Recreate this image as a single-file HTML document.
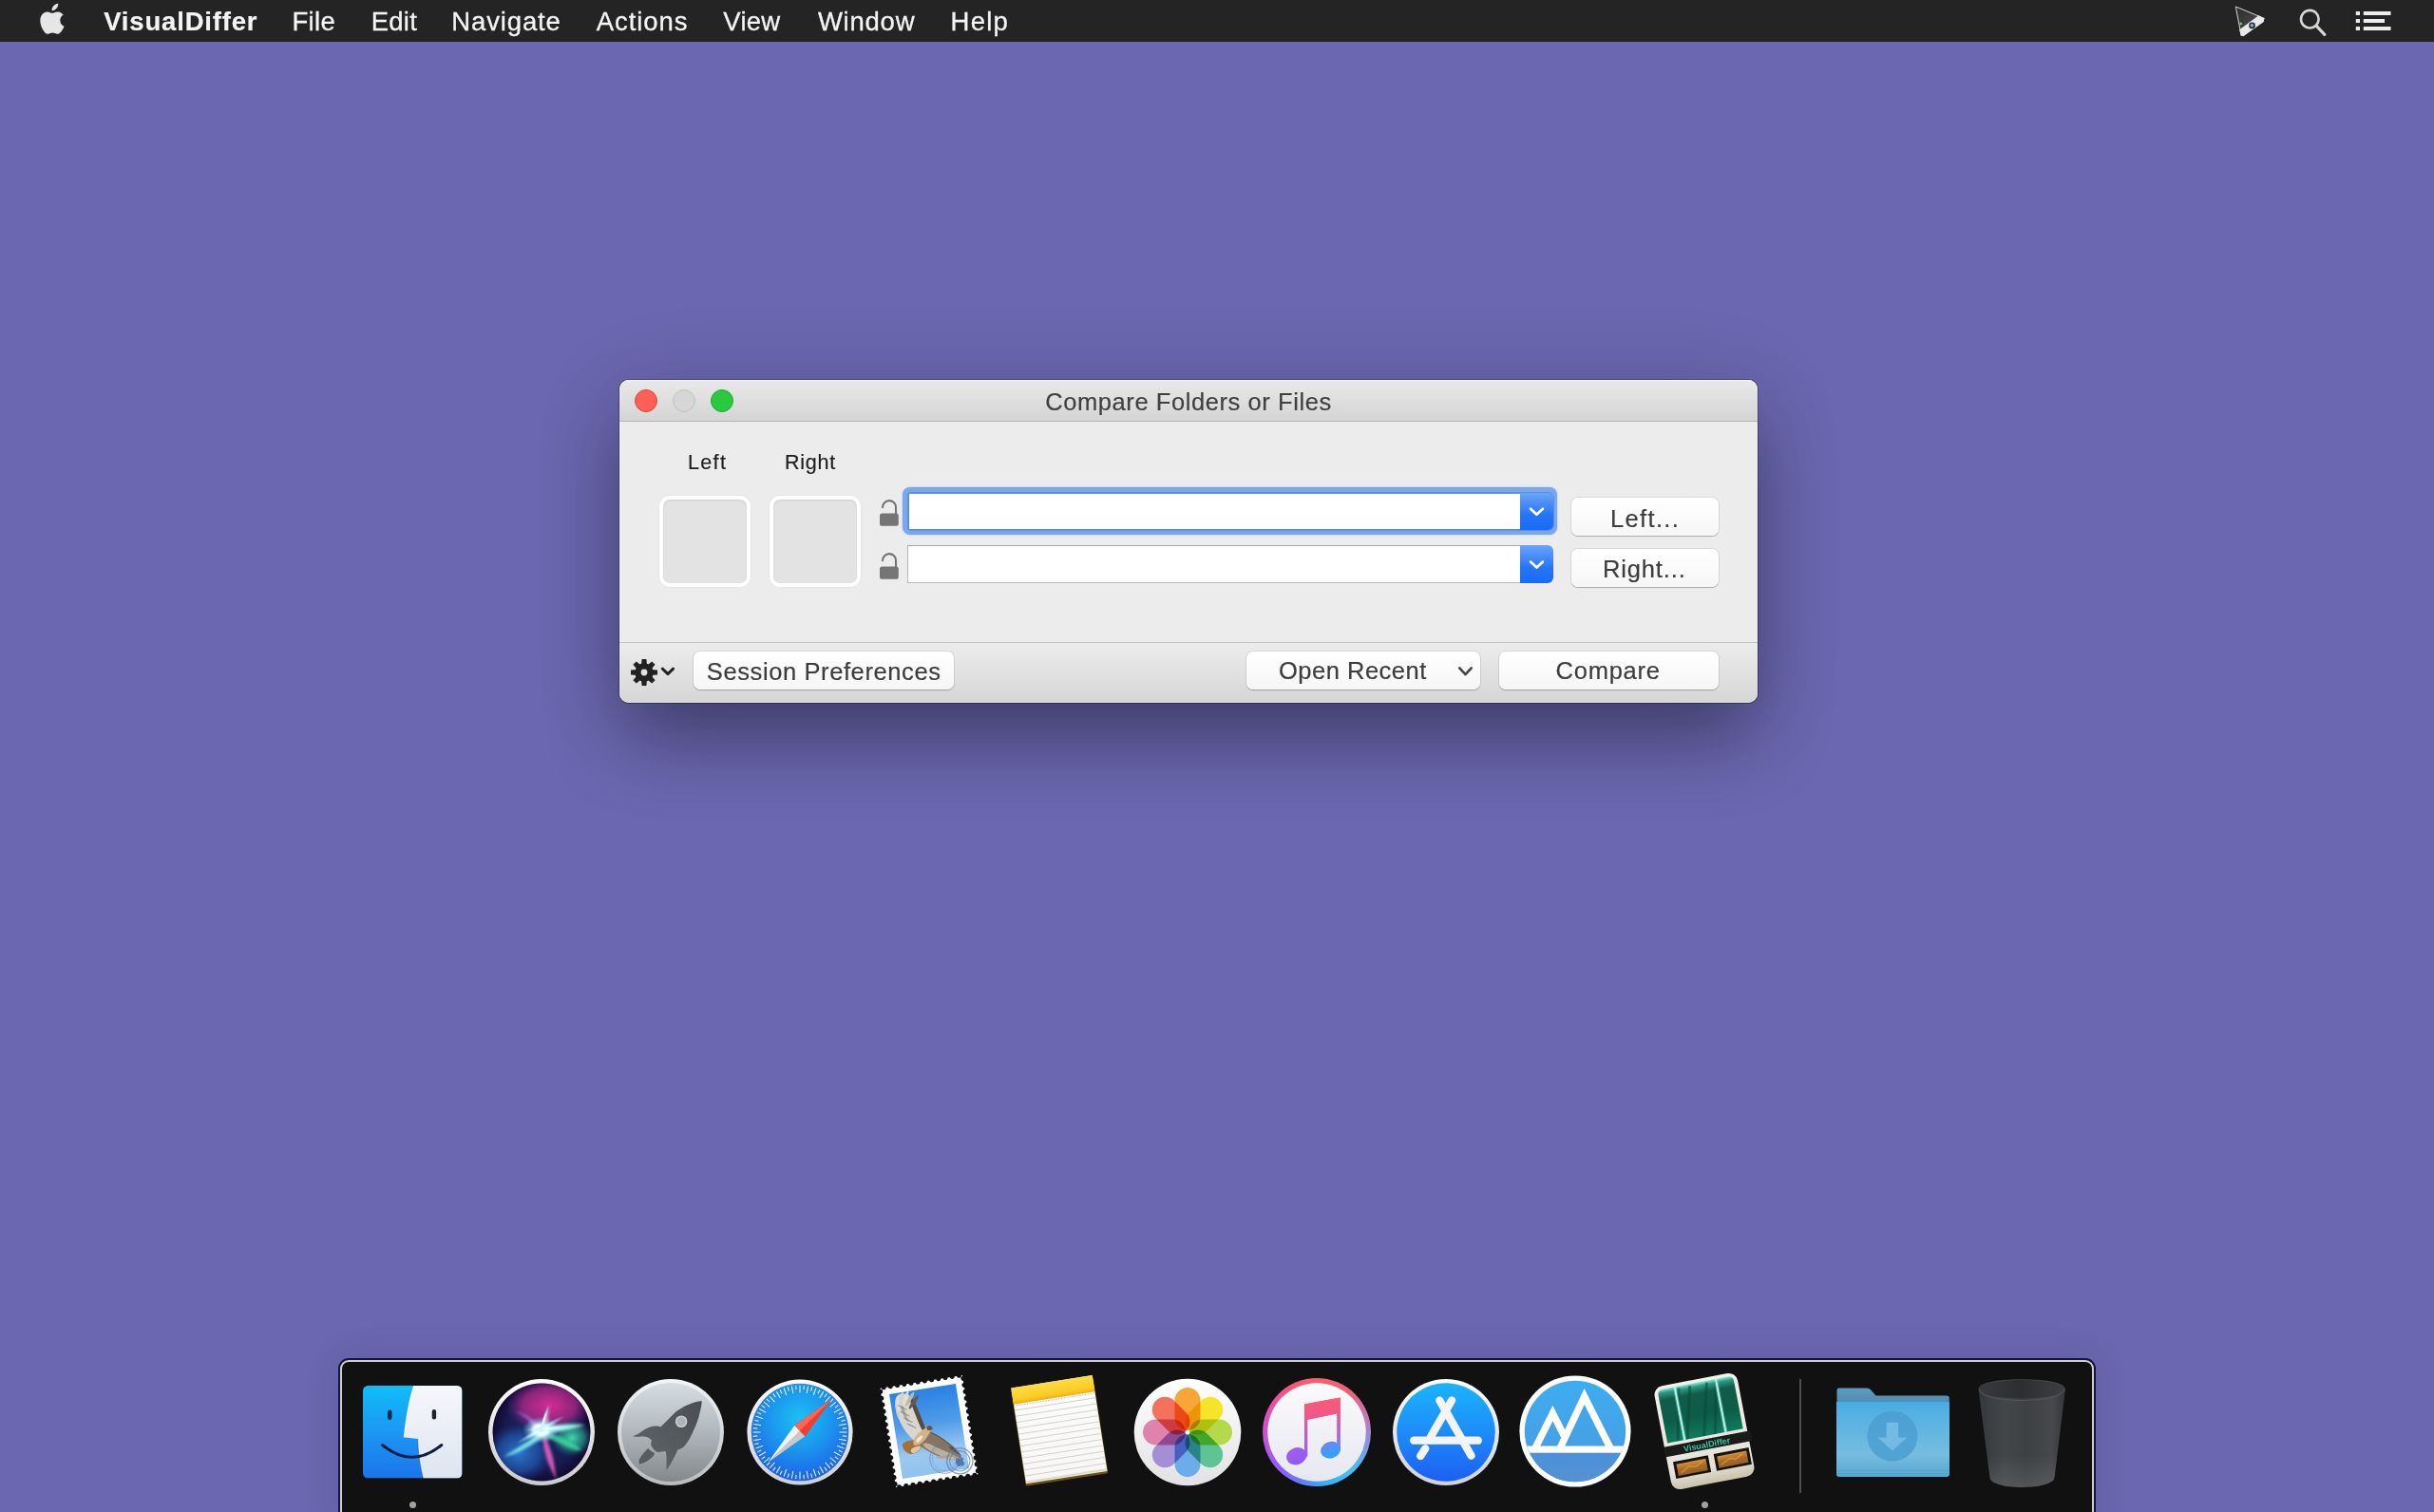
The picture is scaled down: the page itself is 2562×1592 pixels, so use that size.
<!DOCTYPE html>
<html lang="en">
<head>
<meta charset="utf-8">
<title>VisualDiffer</title>
<style>
html,body{margin:0;padding:0}
body{width:2562px;height:1592px;overflow:hidden;background:#6b67b0;position:relative;
  font-family:"Liberation Sans","DejaVu Sans",sans-serif;-webkit-font-smoothing:antialiased}
.abs{position:absolute}
/* ---------- menu bar ---------- */
#menubar{position:absolute;left:0;top:0;width:2562px;height:44px;background:#242424}
#menubar .mi{position:absolute;top:0;height:44px;line-height:43px;font-size:27.5px;color:#f4f4f4;white-space:nowrap;-webkit-text-stroke:.3px #f4f4f4}
#menubar .app{font-weight:bold;-webkit-text-stroke:.2px #f4f4f4}
/* ---------- window ---------- */
#win{position:absolute;left:652px;top:400px;width:1198px;height:340px;border-radius:10px;background:#ececec;
  box-shadow:0 0 0 1px rgba(0,0,0,.3),0 42px 80px -6px rgba(0,0,0,.36),0 10px 100px rgba(0,0,0,.11)}
#titlebar{position:absolute;left:0;top:0;width:1198px;height:43px;border-radius:10px 10px 0 0;
  background:linear-gradient(#e9e9e9,#d4d4d4);border-bottom:1px solid #b4b4b4;box-shadow:inset 0 1px 0 #f6f6f6}
#title{position:absolute;left:0;top:0;width:1198px;height:43px;line-height:44px;text-align:center;font-size:26px;color:#404040;-webkit-text-stroke:.2px #404040;white-space:nowrap}
.tl{position:absolute;top:10px;width:24px;height:24px;border-radius:50%;box-sizing:border-box}
#bottombar{position:absolute;left:0;top:276px;width:1198px;height:64px;border-radius:0 0 10px 10px;
  background:linear-gradient(#ececec,#d6d6d6);border-top:1px solid #c6c6c6;box-sizing:border-box}
.lbl{position:absolute;font-size:22px;color:#1e1e1e;-webkit-text-stroke:.2px #1e1e1e;white-space:nowrap;line-height:26px}
.well{position:absolute;width:88px;height:88px;border:4px solid #fff;border-radius:11px;background:#e3e3e3;
  box-shadow:inset 0 1px 2px rgba(0,0,0,.10),0 0 2px rgba(0,0,0,.08)}
.btn{position:absolute;box-sizing:border-box;border-radius:7px;background:linear-gradient(#ffffff,#f6f6f6);
  box-shadow:0 0 0 1px rgba(0,0,0,.07),0 1px 1px rgba(0,0,0,.22);font-size:26px;color:#3d3d3d;-webkit-text-stroke:.2px #3d3d3d;text-align:center;white-space:nowrap}
.field{position:absolute;box-sizing:border-box;background:#fff;border:1px solid #b9b9b9;border-top-color:#a8a8a8}
.cbtn{position:absolute;width:35px;height:39px;border-radius:0 6px 6px 0;background:linear-gradient(#6ba4f9,#2674f6 60%,#176bf5)}
/* ---------- dock ---------- */
#dock{position:absolute;left:358px;top:1432px;width:1846px;height:170px;box-sizing:border-box;border-radius:9px 9px 0 0;
  background:#111111;border:2px solid #cfcfd0;box-shadow:0 0 0 2px #17133c,0 0 36px 6px rgba(0,0,0,.075)}
.dot{position:absolute;width:7px;height:7px;border-radius:50%;background:#a2a2a2}
</style>
</head>
<body>

<!-- ================= MENU BAR ================= -->
<div id="menubar">
  <svg class="abs" style="left:39.900px;top:2.800px" width="31.400" height="38.100" viewBox="0 0 28 34">
    <path fill="#e6e6e6" d="M18.9 0.6c0.2 1.7-0.5 3.4-1.5 4.6-1.1 1.300-2.800 2.200-4.400 2.100-0.200-1.600 0.600-3.300 1.500-4.400 1.100-1.200 2.900-2.200 4.400-2.300zM23.900 11.200c-0.300 0.200-3.100 1.800-3.100 5.300 0 4.100 3.600 5.500 3.700 5.500-0.000 0.100-0.600 2-1.900 3.900-1.200 1.700-2.400 3.400-4.300 3.400-1.900 0-2.400-1.100-4.500-1.100-2.100 0-2.800 1.100-4.500 1.100-1.800 0.100-3.100-1.800-4.300-3.500-2.400-3.400-4.200-9.700-1.800-13.900 1.200-2.100 3.400-3.400 5.700-3.500 1.800 0 3.400 1.200 4.500 1.200 1.100 0 3.100-1.400 5.200-1.200 0.900 0 3.400 0.400 5 2.700z"/>
  </svg>
  <div class="mi app" id="m0" style="font-size:27.5px;letter-spacing:0.82px;transform:translate(0.2px,0.8px);left:109px">VisualDiffer</div>
  <div class="mi" id="m1" style="font-size:27.5px;letter-spacing:0.4px;transform:translate(-1.6px,0.8px);left:309px">File</div>
  <div class="mi" id="m2" style="font-size:27.5px;letter-spacing:0.2px;transform:translate(-0.2px,0.8px);left:391px">Edit</div>
  <div class="mi" id="m3" style="font-size:27.5px;letter-spacing:0.86px;transform:translate(-1.7px,0.8px);left:477px">Navigate</div>
  <div class="mi" id="m4" style="font-size:27.5px;letter-spacing:0.93px;transform:translate(0.7px,0.8px);left:627px">Actions</div>
  <div class="mi" id="m5" style="font-size:27.5px;letter-spacing:0.27px;transform:translate(1.3px,0.8px);left:760px">View</div>
  <div class="mi" id="m6" style="font-size:27.5px;letter-spacing:0.76px;transform:translate(-0.1px,0.8px);left:861px">Window</div>
  <div class="mi" id="m7" style="font-size:27.5px;letter-spacing:1.2px;transform:translate(0.6px,0.8px);left:1000px">Help</div>
  <svg class="abs" style="left:2348px;top:2px" width="40" height="40" viewBox="0 0 40 40">
    <defs><linearGradient id="pj" x1="0" y1="0" x2="1" y2="1"><stop offset="0" stop-color="#2a2a2a"/><stop offset="1" stop-color="#5a5a5a"/></linearGradient></defs>
    <path d="M5.3 5 L35.4 17.4 L11.200 35.700 Z" fill="url(#pj)" stroke="#d8d8d8" stroke-width="1"/>
    <path d="M9.2 29.200 L29.500 14.200 L35.400 17.400 L34.800 21 L13.400 36.200 L10.700 35.200 Z" fill="#e9e9e9"/>
    <circle cx="22.500" cy="24.900" r="3.400" fill="#2b3440"/><circle cx="22.300" cy="24.700" r="1.600" fill="#9fb2c8"/>
    <circle cx="10.700" cy="23" r="1.300" fill="#7fd07f"/>
  </svg>
  <svg class="abs" style="left:2416px;top:4px" width="38" height="38" viewBox="0 0 38 38"><circle cx="15.300" cy="16.200" r="9.300" fill="none" stroke="#d6d6d6" stroke-width="2.600"/><path d="M22.100 23.200 L30.800 32.300" stroke="#d6d6d6" stroke-width="3.200" stroke-linecap="round"/></svg>
  <svg class="abs" style="left:2478px;top:10px" width="42" height="24" viewBox="0 0 42 24"><g fill="#ededed"><rect x="1.800" y="2" width="4.200" height="4"/><rect x="9.800" y="2" width="28.700" height="4"/><rect x="1.800" y="10" width="4.200" height="4"/><rect x="9.800" y="10" width="22.200" height="4"/><rect x="1.800" y="18" width="4.200" height="4"/><rect x="9.800" y="18" width="28.700" height="4"/></g></svg>
</div>

<!-- ================= WINDOW ================= -->
<div id="win">
  <div id="titlebar"></div>
  <div class="tl" style="left:16px;background:#fe5f57;border:1px solid #e2463f"></div>
  <div class="tl" style="left:56px;background:#d6d6d6;border:1px solid #c2c2c2"></div>
  <div class="tl" style="left:96px;background:#29c940;border:1px solid #1eab2f"></div>
  <div id="title"><span id="titletxt" style="display:inline-block;font-size:25.5px;letter-spacing:0.58px;transform:translate(0.0px,1.3px)">Compare Folders or Files</span></div>

  <div class="lbl" id="lblL" style="font-size:21.5px;letter-spacing:1.33px;transform:translate(-1.0px,2.4px);left:73px;top:72px">Left</div>
  <div class="lbl" id="lblR" style="font-size:21.5px;letter-spacing:0.75px;transform:translate(-1.0px,2.4px);left:175px;top:72px">Right</div>
  <div class="well" style="left:42px;top:122px"></div>
  <div class="well" style="left:158px;top:122px"></div>

  <svg class="abs" style="left:273px;top:125px" width="22" height="30" viewBox="0 0 22 30"><path d="M4 9.2 A7 7 0 0 1 18 9 V16" fill="none" stroke="#757575" stroke-width="2.1" stroke-linecap="round"/><rect x="1" y="15.4" width="19.8" height="13.4" rx="2.6" fill="#757575"/></svg>
  <svg class="abs" style="left:273px;top:181px" width="22" height="30" viewBox="0 0 22 30"><path d="M4 9.2 A7 7 0 0 1 18 9 V16" fill="none" stroke="#757575" stroke-width="2.1" stroke-linecap="round"/><rect x="1" y="15.4" width="19.8" height="13.4" rx="2.6" fill="#757575"/></svg>
  <div class="abs" style="left:298px;top:113px;width:689px;height:50px;border-radius:8px;background:#7aa8ef;box-shadow:0 0 2px rgba(122,168,239,.7)"></div>
  <div class="abs" style="left:302.5px;top:117.5px;width:681px;height:41px;border-radius:4px 7px 7px 4px;background:#5e8fd8"></div>
  <div class="field" style="left:304.5px;top:119.5px;width:644px;height:37px;border:none"></div>
  <div class="cbtn" style="left:948px;top:118.5px;height:39px"></div>
  <svg class="abs" style="left:948px;top:118px" width="35" height="40" viewBox="0 0 35 40"><path d="M11.1 17.7 L17.5 23.8 L23.9 17.7" fill="none" stroke="#fff" stroke-width="2.7" stroke-linecap="round" stroke-linejoin="round"/></svg>
  <div class="field" style="left:303px;top:174px;width:646px;height:40px"></div>
  <div class="cbtn" style="left:948px;top:174px;height:40px"></div>
  <svg class="abs" style="left:948px;top:174px" width="35" height="40" viewBox="0 0 35 40"><path d="M11.1 17.5 L17.5 23.6 L23.9 17.5" fill="none" stroke="#fff" stroke-width="2.7" stroke-linecap="round" stroke-linejoin="round"/></svg>

  <div class="btn" id="bLeft" style="left:1002px;top:124px;width:155px;height:40px;line-height:42px"><span id="tLeft" style="display:inline-block;font-size:25.5px;letter-spacing:1.33px;transform:translate(0.1px,1.0px)">Left...</span></div>
  <div class="btn" id="bRight" style="left:1002px;top:178px;width:155px;height:40px;line-height:42px"><span id="tRight" style="display:inline-block;font-size:25.5px;letter-spacing:0.86px;transform:translate(-0.7px,0.4px)">Right...</span></div>

  <div id="bottombar"></div>
  <svg class="abs" style="left:10px;top:292px" width="32" height="32" viewBox="0 0 32 32"><g fill="#222"><path transform="rotate(0 16 16)" d="M12.900 9.500 L13.600 2 H18.400 L19.100 9.500 Z"/><path transform="rotate(45 16 16)" d="M12.900 9.500 L13.600 2 H18.400 L19.100 9.500 Z"/><path transform="rotate(90 16 16)" d="M12.900 9.500 L13.600 2 H18.400 L19.100 9.500 Z"/><path transform="rotate(135 16 16)" d="M12.900 9.500 L13.600 2 H18.400 L19.100 9.500 Z"/><path transform="rotate(180 16 16)" d="M12.900 9.500 L13.600 2 H18.400 L19.100 9.500 Z"/><path transform="rotate(225 16 16)" d="M12.900 9.500 L13.600 2 H18.400 L19.100 9.500 Z"/><path transform="rotate(270 16 16)" d="M12.900 9.500 L13.600 2 H18.400 L19.100 9.500 Z"/><path transform="rotate(315 16 16)" d="M12.900 9.500 L13.600 2 H18.400 L19.100 9.500 Z"/><path fill-rule="evenodd" d="M16 6.300 A9.700 9.700 0 1 0 16 25.700 A9.700 9.700 0 1 0 16 6.300 Z M16 12.6 A3.4 3.4 0 1 1 16 19.4 A3.4 3.4 0 1 1 16 12.6 Z"/></g></svg>
  <svg class="abs" style="left:42px;top:298px" width="20" height="16" viewBox="0 0 20 16"><path d="M3.3 6.100 L9 11.600 L14.600 6.100" fill="none" stroke="#222" stroke-width="2.900" stroke-linecap="round" stroke-linejoin="round"/></svg>
  <svg class="abs" style="left:880px;top:298px;z-index:3" width="22" height="16" viewBox="0 0 22 16"><path d="M4.3 5.3 L10.5 12.1 L16.7 5.3" fill="none" stroke="#444" stroke-width="2.6" stroke-linecap="round" stroke-linejoin="round"/></svg>
  <div class="btn" id="bSess" style="left:78px;top:286px;width:274px;height:40px;line-height:41px"><span id="tSess" style="display:inline-block;font-size:25.5px;letter-spacing:0.6px;transform:translate(0.2px,1.4px)">Session Preferences</span></div>
  <div class="btn" id="bOpen" style="left:660px;top:286px;width:246px;height:40px;line-height:41px"><span id="openTxt" style="display:inline-block;font-size:25.5px;letter-spacing:0.5px;transform:translate(-1.0px,0.4px);position:absolute;left:35px;top:0">Open Recent</span></div>
  <div class="btn" id="bCmp" style="left:926px;top:286px;width:231px;height:40px;line-height:41px"><span id="tCmp" style="display:inline-block;font-size:25.5px;letter-spacing:0.73px;transform:translate(-0.9px,0.4px)">Compare</span></div>
</div>

<!-- ================= DOCK ================= -->
<div id="dock"></div>
<div class="dot" style="left:430.500px;top:1580.500px"></div>
<div class="dot" style="left:1790.500px;top:1580.500px"></div>
<div class="abs" style="left:1894.300px;top:1452px;width:2px;height:120px;background:#4e4e4e"></div>
<!--DOCK-ICONS-START-->
<svg class="abs" style="left:382px;top:1459px" width="104.5" height="97.5" viewBox="0 0 104.5 97.5"><defs><linearGradient id="fdL" x1="0" y1="0" x2="0" y2="1"><stop offset="0" stop-color="#10bdf8"/><stop offset=".5" stop-color="#1c97f3"/><stop offset="1" stop-color="#1b74ec"/></linearGradient>
<linearGradient id="fdR" x1="0" y1="0" x2="0" y2="1"><stop offset="0" stop-color="#f6f7fb"/><stop offset="1" stop-color="#dde5f0"/></linearGradient>
<clipPath id="fdC"><rect x="0" y="0" width="104.5" height="97.5" rx="5.5"/></clipPath></defs>
<g clip-path="url(#fdC)"><rect width="104.5" height="97.5" fill="url(#fdL)"/>
<path d="M53.2 0 C49 12 45.5 30 42.7 54.3 L57.7 56 C58 70 60 84 63.4 97.5 L104.5 97.5 L104.5 0 Z" fill="url(#fdR)"/>
<path d="M63.4 97.5 C60 84 58 70 57.7 56" fill="none" stroke="#16305a" stroke-opacity=".35" stroke-width="1"/>
<rect x="26.1" y="25.5" width="4.4" height="10.5" rx="2.2" fill="#14274a"/><rect x="72.7" y="24.9" width="4.4" height="10.5" rx="2.2" fill="#1d2430"/>
<path d="M20.5 62.5 Q51.6 88 82.8 62.5" fill="none" stroke="#0f1f3c" stroke-width="3" stroke-linecap="round"/></g></svg>
<svg class="abs" style="left:514.2px;top:1452px;overflow:visible" width="112" height="112" viewBox="-56 -56 112 112"><defs><radialGradient id="srB" cx=".5" cy=".5" r=".5"><stop offset="0" stop-color="#1d2a66"/><stop offset=".75" stop-color="#171a4e"/><stop offset="1" stop-color="#100a30"/></radialGradient>
<radialGradient id="srM" cx=".5" cy=".5" r=".5"><stop offset="0" stop-color="#d62d94"/><stop offset=".6" stop-color="#b02a8a" stop-opacity=".75"/><stop offset="1" stop-color="#7a2090" stop-opacity="0"/></radialGradient>
<radialGradient id="srBl" cx=".5" cy=".5" r=".5"><stop offset="0" stop-color="#2a78d0"/><stop offset=".6" stop-color="#2258b0" stop-opacity=".7"/><stop offset="1" stop-color="#1d3a90" stop-opacity="0"/></radialGradient>
<radialGradient id="srT" cx=".5" cy=".5" r=".5"><stop offset="0" stop-color="#3fd9b0"/><stop offset=".6" stop-color="#2aa890" stop-opacity=".6"/><stop offset="1" stop-color="#1a6a70" stop-opacity="0"/></radialGradient>
<radialGradient id="srW" cx=".5" cy=".5" r=".5"><stop offset="0" stop-color="#fff"/><stop offset=".3" stop-color="#dffcff" stop-opacity=".9"/><stop offset="1" stop-color="#7fe8ff" stop-opacity="0"/></radialGradient>
<linearGradient id="srR" x1="0" y1="0" x2="0" y2="1"><stop offset="0" stop-color="#ffffff"/><stop offset="1" stop-color="#c9c9cf"/></linearGradient>
<clipPath id="srC"><circle r="51.5"/></clipPath><filter id="srF" x="-50%" y="-50%" width="200%" height="200%"><feGaussianBlur stdDeviation="1.6"/></filter></defs>
<circle r="56" fill="url(#srR)"/><circle r="51.5" fill="url(#srB)"/>
<g clip-path="url(#srC)">
<ellipse cx="8" cy="-28" rx="46" ry="30" fill="url(#srM)"/>
<ellipse cx="-24" cy="22" rx="36" ry="32" fill="url(#srBl)"/>
<ellipse cx="32" cy="6" rx="22" ry="20" fill="url(#srT)"/>
<g filter="url(#srF)">
<path d="M6 -26 C2 -8 4 6 10 20 C14 32 14 42 16 50 C10 40 4 28 2 12 C0 0 2 -14 6 -26Z" fill="#f060c8" opacity=".85"/>
<path d="M-40 26 C-20 14 -6 4 4 -6 L6 2 C-8 12 -22 22 -40 26Z" fill="#7ff0f0" opacity=".9"/>
<path d="M-2 -4 C14 -10 30 -8 46 -8 C30 -2 14 0 0 2Z" fill="#a8fff0" opacity=".9"/>
<path d="M2 0 C16 2 30 8 42 18 C36 22 20 10 0 4Z" fill="#3fd9a0" opacity=".8"/>
<path d="M-28 -22 C-16 -20 -6 -12 0 -2 L-4 0 C-10 -10 -18 -18 -28 -22Z" fill="#b080f0" opacity=".7"/>
<path d="M8 -28 C6 -16 2 -8 -2 0 L2 2 C6 -8 8 -18 8 -28Z" fill="#ffd0f0" opacity=".8"/>
</g>
<ellipse cx="-1" cy="-2.5" rx="19" ry="14" fill="url(#srW)"/><ellipse cx="-1" cy="-2.5" rx="9" ry="6.5" fill="#fff" filter="url(#srF)"/>
<ellipse cx="-1" cy="-2.5" rx="30" ry="3.5" fill="url(#srW)" transform="rotate(-30 -1 -2.5)"/><ellipse cx="8" cy="-4" rx="26" ry="2.8" fill="url(#srW)" transform="rotate(-4 8 -4)"/><ellipse cx="3" cy="-14" rx="16" ry="2.2" fill="url(#srW)" transform="rotate(-72 3 -14)"/>
</g></svg>
<svg class="abs" style="left:650px;top:1452px;overflow:visible" width="112" height="112" viewBox="-56 -56 112 112"><defs><linearGradient id="lpB" x1="0" y1="0" x2="0" y2="1"><stop offset="0" stop-color="#d6dee3"/><stop offset=".45" stop-color="#b4bbc0"/><stop offset="1" stop-color="#85888b"/></linearGradient>
<linearGradient id="lpR" x1="0" y1="0" x2="0" y2="1"><stop offset="0" stop-color="#f2f5f7"/><stop offset="1" stop-color="#b9bcbf"/></linearGradient>
<linearGradient id="lpK" x1="1" y1="0" x2="0" y2="1"><stop offset="0" stop-color="#4a4e52"/><stop offset="1" stop-color="#62676b"/></linearGradient></defs>
<circle r="56" fill="url(#lpR)"/><circle r="52" fill="url(#lpB)"/>
<path d="M32.7 -32.9 C20 -31.5 8 -24 2.8 -19.1 C-2 -14 -7 -9 -10.5 -5.8 C-16 -7.5 -22 -6.5 -28 -2.5 C-33 1 -37 3.5 -39.9 4.2 C-36 5 -32 4.6 -28 4.6 C-24 5 -21.5 7 -20 8.7 C-20.8 10.5 -21 12.5 -20.5 14.2 C-19 17.5 -16.5 19.5 -13.9 20.9 C-11 20.8 -8 20.4 -5.5 19.7 C-4.5 23 -4.3 27 -4.5 31 C-4.6 34 -4.6 37 -4.4 39.7 C-2.5 37.5 -0.8 34.5 0.6 31.9 C3.5 27 6 22.5 7.2 18.6 C10 17.8 12 16.7 13.9 15.3 C18 10.5 21.5 4.5 23.8 -1.3 C27 -8 29.5 -14.5 30.5 -20.2 C31.8 -25 32.7 -29 32.7 -32.9Z" fill="url(#lpK)"/>
<circle cx="11.1" cy="-11.3" r="6.3" fill="#c6cdd1"/><circle cx="11.1" cy="-11.3" r="4.6" fill="#aeb5b9"/>
<path d="M-23.8 17 C-28 21 -32 26 -33.3 29.7 C-33.6 31.5 -33.3 32.8 -32.7 33.6 C-29 32.5 -26 31 -23.8 29.7 C-21 27.8 -19 26 -17.7 24.2 C-17.3 23.4 -17.2 22.6 -17.2 22 C-19.5 21 -22 19 -23.8 17Z" fill="#585c60"/></svg>
<svg class="abs" style="left:786.4px;top:1452px;overflow:visible" width="112" height="112" viewBox="-56 -56 112 112"><defs><radialGradient id="sfB" cx=".5" cy=".36" r=".7"><stop offset="0" stop-color="#1cc0f4"/><stop offset=".45" stop-color="#1b96ee"/><stop offset="1" stop-color="#1f57e6"/></radialGradient>
<linearGradient id="sfR" x1="0" y1="0" x2="0" y2="1"><stop offset="0" stop-color="#fbfbfd"/><stop offset="1" stop-color="#cfd0d6"/></linearGradient></defs>
<circle r="55.6" fill="url(#sfR)"/><circle r="51.3" fill="url(#sfB)"/>
<g stroke="#e8f4ff" stroke-width="1.15" stroke-opacity=".95"><path d="M0 -49.5 L0 -41.5"/><path d="M4.31 -49.31 L3.92 -44.83"/><path d="M8.6 -48.75 L7.21 -40.87"/><path d="M12.81 -47.81 L11.65 -43.47"/><path d="M16.93 -46.51 L14.19 -39"/><path d="M20.92 -44.86 L19.02 -40.78"/><path d="M24.75 -42.87 L20.75 -35.94"/><path d="M28.39 -40.55 L25.81 -36.86"/><path d="M31.82 -37.92 L26.68 -31.79"/><path d="M35 -35 L31.82 -31.82"/><path d="M37.92 -31.82 L31.79 -26.68"/><path d="M40.55 -28.39 L36.86 -25.81"/><path d="M42.87 -24.75 L35.94 -20.75"/><path d="M44.86 -20.92 L40.78 -19.02"/><path d="M46.51 -16.93 L39 -14.19"/><path d="M47.81 -12.81 L43.47 -11.65"/><path d="M48.75 -8.6 L40.87 -7.21"/><path d="M49.31 -4.31 L44.83 -3.92"/><path d="M49.5 -0 L41.5 -0"/><path d="M49.31 4.31 L44.83 3.92"/><path d="M48.75 8.6 L40.87 7.21"/><path d="M47.81 12.81 L43.47 11.65"/><path d="M46.51 16.93 L39 14.19"/><path d="M44.86 20.92 L40.78 19.02"/><path d="M42.87 24.75 L35.94 20.75"/><path d="M40.55 28.39 L36.86 25.81"/><path d="M37.92 31.82 L31.79 26.68"/><path d="M35 35 L31.82 31.82"/><path d="M31.82 37.92 L26.68 31.79"/><path d="M28.39 40.55 L25.81 36.86"/><path d="M24.75 42.87 L20.75 35.94"/><path d="M20.92 44.86 L19.02 40.78"/><path d="M16.93 46.51 L14.19 39"/><path d="M12.81 47.81 L11.65 43.47"/><path d="M8.6 48.75 L7.21 40.87"/><path d="M4.31 49.31 L3.92 44.83"/><path d="M0 49.5 L0 41.5"/><path d="M-4.31 49.31 L-3.92 44.83"/><path d="M-8.6 48.75 L-7.21 40.87"/><path d="M-12.81 47.81 L-11.65 43.47"/><path d="M-16.93 46.51 L-14.19 39"/><path d="M-20.92 44.86 L-19.02 40.78"/><path d="M-24.75 42.87 L-20.75 35.94"/><path d="M-28.39 40.55 L-25.81 36.86"/><path d="M-31.82 37.92 L-26.68 31.79"/><path d="M-35 35 L-31.82 31.82"/><path d="M-37.92 31.82 L-31.79 26.68"/><path d="M-40.55 28.39 L-36.86 25.81"/><path d="M-42.87 24.75 L-35.94 20.75"/><path d="M-44.86 20.92 L-40.78 19.02"/><path d="M-46.51 16.93 L-39 14.19"/><path d="M-47.81 12.81 L-43.47 11.65"/><path d="M-48.75 8.6 L-40.87 7.21"/><path d="M-49.31 4.31 L-44.83 3.92"/><path d="M-49.5 0 L-41.5 0"/><path d="M-49.31 -4.31 L-44.83 -3.92"/><path d="M-48.75 -8.6 L-40.87 -7.21"/><path d="M-47.81 -12.81 L-43.47 -11.65"/><path d="M-46.51 -16.93 L-39 -14.19"/><path d="M-44.86 -20.92 L-40.78 -19.02"/><path d="M-42.87 -24.75 L-35.94 -20.75"/><path d="M-40.55 -28.39 L-36.86 -25.81"/><path d="M-37.92 -31.82 L-31.79 -26.68"/><path d="M-35 -35 L-31.82 -31.82"/><path d="M-31.82 -37.92 L-26.68 -31.79"/><path d="M-28.39 -40.55 L-25.81 -36.86"/><path d="M-24.75 -42.87 L-20.75 -35.94"/><path d="M-20.92 -44.86 L-19.02 -40.78"/><path d="M-16.93 -46.51 L-14.19 -39"/><path d="M-12.81 -47.81 L-11.65 -43.47"/><path d="M-8.6 -48.75 L-7.21 -40.87"/><path d="M-4.31 -49.31 L-3.92 -44.83"/></g>
<path d="M33.3 -34.6 L5.24 4.19 L-0.25 -1.35Z" fill="#f0392f"/>
<path d="M33.3 -34.6 L-5.74 -6.89 L-0.25 -1.35Z" fill="#ff5a48"/>
<path d="M33.3 -34.6 L5.24 4.19 L-5.74 -6.89Z" fill="#f23c30"/>
<path d="M33.3 -34.6 L-5.74 -6.89 L-0.25 -1.35Z" fill="#ff6652"/>
<path d="M-33.8 31.9 L5.24 4.19 L-0.25 -1.35Z" fill="#c9c9c9"/>
<path d="M-33.8 31.9 L-5.74 -6.89 L-0.25 -1.35Z" fill="#f4f4f4"/></svg>
<svg class="abs" style="left:918.2px;top:1442.2px;overflow:visible" width="120" height="130" viewBox="-60 -65 120 130"><defs><mask id="mlM"><rect x="-47.8" y="-56.8" width="95.6" height="113.6" fill="#fff"/><g fill="#000"><circle cx="-40.15" cy="-53.1" r="2.5"/><circle cx="-40.15" cy="53.1" r="2.5"/><circle cx="-32.85" cy="-53.1" r="2.5"/><circle cx="-32.85" cy="53.1" r="2.5"/><circle cx="-25.55" cy="-53.1" r="2.5"/><circle cx="-25.55" cy="53.1" r="2.5"/><circle cx="-18.25" cy="-53.1" r="2.5"/><circle cx="-18.25" cy="53.1" r="2.5"/><circle cx="-10.95" cy="-53.1" r="2.5"/><circle cx="-10.95" cy="53.1" r="2.5"/><circle cx="-3.65" cy="-53.1" r="2.5"/><circle cx="-3.65" cy="53.1" r="2.5"/><circle cx="3.65" cy="-53.1" r="2.5"/><circle cx="3.65" cy="53.1" r="2.5"/><circle cx="10.95" cy="-53.1" r="2.5"/><circle cx="10.95" cy="53.1" r="2.5"/><circle cx="18.25" cy="-53.1" r="2.5"/><circle cx="18.25" cy="53.1" r="2.5"/><circle cx="25.55" cy="-53.1" r="2.5"/><circle cx="25.55" cy="53.1" r="2.5"/><circle cx="32.85" cy="-53.1" r="2.5"/><circle cx="32.85" cy="53.1" r="2.5"/><circle cx="40.15" cy="-53.1" r="2.5"/><circle cx="40.15" cy="53.1" r="2.5"/><circle cx="-44.1" cy="-49.28" r="2.5"/><circle cx="44.1" cy="-49.28" r="2.5"/><circle cx="-44.1" cy="-42.24" r="2.5"/><circle cx="44.1" cy="-42.24" r="2.5"/><circle cx="-44.1" cy="-35.2" r="2.5"/><circle cx="44.1" cy="-35.2" r="2.5"/><circle cx="-44.1" cy="-28.16" r="2.5"/><circle cx="44.1" cy="-28.16" r="2.5"/><circle cx="-44.1" cy="-21.12" r="2.5"/><circle cx="44.1" cy="-21.12" r="2.5"/><circle cx="-44.1" cy="-14.08" r="2.5"/><circle cx="44.1" cy="-14.08" r="2.5"/><circle cx="-44.1" cy="-7.04" r="2.5"/><circle cx="44.1" cy="-7.04" r="2.5"/><circle cx="-44.1" cy="0" r="2.5"/><circle cx="44.1" cy="0" r="2.5"/><circle cx="-44.1" cy="7.04" r="2.5"/><circle cx="44.1" cy="7.04" r="2.5"/><circle cx="-44.1" cy="14.08" r="2.5"/><circle cx="44.1" cy="14.08" r="2.5"/><circle cx="-44.1" cy="21.12" r="2.5"/><circle cx="44.1" cy="21.12" r="2.5"/><circle cx="-44.1" cy="28.16" r="2.5"/><circle cx="44.1" cy="28.16" r="2.5"/><circle cx="-44.1" cy="35.2" r="2.5"/><circle cx="44.1" cy="35.2" r="2.5"/><circle cx="-44.1" cy="42.24" r="2.5"/><circle cx="44.1" cy="42.24" r="2.5"/><circle cx="-44.1" cy="49.28" r="2.5"/><circle cx="44.1" cy="49.28" r="2.5"/></g></mask>
<linearGradient id="mlS" x1="0" y1="0" x2="0" y2="1"><stop offset="0" stop-color="#2b82e2"/><stop offset=".4" stop-color="#4e9be8"/><stop offset=".75" stop-color="#9cc8f0"/><stop offset="1" stop-color="#8fc2ee"/></linearGradient></defs>
<g transform="rotate(-9)">
<rect x="-43.8" y="-52.8" width="87.6" height="105.6" fill="#fdfdfd" mask="url(#mlM)"/>
<rect x="-35.4" y="-45" width="70.8" height="90" fill="url(#mlS)"/>
<path d="M-6.52 6.68 Q-2.64 2.22 -4.46 -6.32 Q-6.28 -14.86 -8.2 -22.77 Q-10.12 -30.69 -11.39 -34.7 Q-12.66 -38.71 -15.75 -41.23 Q-18.84 -43.75 -22.65 -43.72 Q-26.46 -43.69 -28.65 -40.73 Q-30.83 -37.78 -31.09 -32.11 Q-31.35 -26.44 -30.04 -19.89 Q-28.73 -13.33 -26.42 -7.89 Q-24.11 -2.45 -21.04 2.16 Q-17.96 6.77 -14.18 8.96 Q-10.4 11.14 -6.52 6.68 Z" fill="#d9d6d0"/><path d="M-4.72 0.35 Q-2.34 1.36 -4.16 -7.17 Q-5.99 -15.71 -7.69 -22.96 Q-9.4 -30.21 -10.98 -34.27 Q-12.56 -38.33 -14.1 -38.57 Q-15.65 -38.82 -14.58 -33.57 Q-13.51 -28.32 -12.01 -21.74 Q-10.51 -15.16 -8.81 -7.91 Q-7.1 -0.66 -4.72 0.35 Z" fill="#5a4a3a"/><path d="M-24.72 -39.74 Q-26.27 -39.99 -26.01 -33.6 Q-25.76 -27.21 -23.95 -20.58 Q-22.15 -13.95 -20.6 -13.71 Q-19.05 -13.46 -20.86 -20.09 Q-22.66 -26.72 -22.92 -33.11 Q-23.18 -39.5 -24.72 -39.74 Z" fill="#a9a59d"/><path d="M-8.38 2.03 Q-2.95 -2.19 2.79 1.58 Q8.54 5.35 14.05 10.66 Q19.55 15.97 24.03 21.76 Q28.51 27.54 28.5 30.4 Q28.49 33.25 23.89 33.47 Q19.28 33.7 13.29 31.48 Q7.29 29.26 1.59 25.18 Q-4.11 21.11 -8.26 17.28 Q-12.41 13.45 -13.11 9.85 Q-13.81 6.25 -8.38 2.03 Z" fill="#85745f"/><path d="M-7.21 11.77 Q-10.5 12.52 -6.14 17.01 Q-1.78 21.51 3.97 25.28 Q9.72 29.04 15.13 30.98 Q20.53 32.91 24.05 32.71 Q27.57 32.51 22.71 29.2 Q17.84 25.89 12.04 22.43 Q6.24 18.97 1.16 15 Q-3.92 11.02 -7.21 11.77 Z" fill="#b9b0a2"/><path d="M2.01 1.96 Q-1.5 0.13 4.25 3.9 Q9.99 7.67 14.88 12.88 Q19.76 18.1 23.41 23.12 Q27.06 28.14 25.64 25.06 Q24.23 21.98 19.34 16.76 Q14.46 11.55 9.99 7.67 Q5.53 3.79 2.01 1.96 Z" fill="#4e4236"/><ellipse cx="-29.27" cy="-27.21" rx="1.89" ry="8.65" transform="rotate(1 -29.27 -27.21)" fill="#cfccc6"/><ellipse cx="-27.66" cy="-33.13" rx="1.89" ry="8.65" transform="rotate(6 -27.66 -33.13)" fill="#e2dfd9"/><ellipse cx="-23.93" cy="-36.81" rx="1.89" ry="8.65" transform="rotate(19 -23.93 -36.81)" fill="#d5d2cc"/><ellipse cx="-19.27" cy="-37.87" rx="1.89" ry="8.65" transform="rotate(29 -19.27 -37.87)" fill="#e2dfd9"/><ellipse cx="-14.74" cy="-36.7" rx="1.89" ry="8.65" transform="rotate(39 -14.74 -36.7)" fill="#bdb8b0"/><ellipse cx="-11.32" cy="-32.79" rx="1.89" ry="8.65" transform="rotate(43 -11.32 -32.79)" fill="#6a5948"/><ellipse cx="23.4" cy="24.59" rx="1.66" ry="7.32" transform="rotate(-43 23.4 24.59)" fill="#5a4c3e"/><ellipse cx="23.46" cy="28.42" rx="1.66" ry="7.32" transform="rotate(-55 23.46 28.42)" fill="#8d7d69"/><ellipse cx="20.67" cy="30.45" rx="1.66" ry="7.32" transform="rotate(-67 20.67 30.45)" fill="#a79b8b"/><ellipse cx="15.9" cy="30.82" rx="1.66" ry="7.32" transform="rotate(-77 15.9 30.82)" fill="#c3baac"/><ellipse cx="10.56" cy="29.08" rx="1.66" ry="7.32" transform="rotate(-85 10.56 29.08)" fill="#b0a595"/><ellipse cx="-24.02" cy="-29.19" rx="0.55" ry="5.77" transform="rotate(-53 -24.02 -29.19)" fill="#8f8a82"/><ellipse cx="-22.32" cy="-22.18" rx="0.55" ry="5.77" transform="rotate(-53 -22.32 -22.18)" fill="#8f8a82"/><ellipse cx="-20.07" cy="-15.08" rx="0.55" ry="5.77" transform="rotate(-53 -20.07 -15.08)" fill="#8f8a82"/><ellipse cx="-17.19" cy="-8.45" rx="0.55" ry="5.77" transform="rotate(-53 -17.19 -8.45)" fill="#8f8a82"/><path d="M-12.24 8.44 Q-15.66 5.99 -22.59 6.48 Q-29.52 6.97 -29.96 9.75 Q-30.4 12.54 -29.06 15.29 Q-27.72 18.04 -24.53 19.94 Q-21.34 21.84 -16.65 20.24 Q-11.95 18.63 -10.39 14.76 Q-8.82 10.88 -12.24 8.44 Z" fill="#a5703a"/><path d="M-16.52 13.76 Q-22.69 14.69 -22.27 18.06 Q-21.86 21.42 -17.16 19.82 Q-12.46 18.21 -11.4 15.53 Q-10.34 12.84 -16.52 13.76 Z" fill="#d8c8a6"/><path d="M-0.86 -4.33 Q4.35 -5.22 2.07 -0.82 Q-0.21 3.58 -5.69 8.1 Q-11.16 12.63 -15.28 12.61 Q-19.41 12.59 -18.25 8.53 Q-17.1 4.46 -11.59 0.51 Q-6.08 -3.44 -0.86 -4.33 Z" fill="#d2b48a"/><path d="M-9.96 3.54 Q-5.95 2.27 -8.4 5.69 Q-10.84 9.11 -13.47 9.65 Q-16.09 10.19 -15.03 7.5 Q-13.97 4.81 -9.96 3.54 Z" fill="#efe6d4"/><path d="M-1.77 -4.43 Q-0.98 -6.2 1.45 -5.5 Q3.87 -4.8 4.12 -3.17 Q4.37 -1.55 2.19 -0.94 Q-0 -0.34 -1.28 -1.49 Q-2.56 -2.65 -1.77 -4.43 Z" fill="#6e5236"/>
<g fill="none" stroke="#5f7aa2" stroke-opacity=".75"><circle cx="27" cy="36" r="13.6" stroke-width="1.3"/><circle cx="27" cy="36" r="10.6" stroke-width="1"/><circle cx="11.5" cy="31" r="15.5" stroke-width="1.1" stroke-opacity=".5"/><circle cx="11.5" cy="31" r="13" stroke-width=".8" stroke-opacity=".4"/></g>
<path transform="translate(21.5 29.3) scale(.42)" fill="#4a70a6" fill-opacity=".9" d="M18.9 0.6c0.2 1.7-0.5 3.4-1.5 4.6-1.1 1.3-2.8 2.2-4.4 2.1-0.2-1.6 0.6-3.3 1.5-4.4 1.1-1.2 2.9-2.2 4.4-2.3zM23.9 11.2c-0.3 0.2-3.1 1.8-3.1 5.3 0 4.1 3.6 5.5 3.7 5.5 0 0.1-0.6 2-1.9 3.9-1.2 1.7-2.4 3.4-4.3 3.4-1.9 0-2.4-1.1-4.5-1.1-2.1 0-2.8 1.1-4.5 1.1-1.8 0.1-3.1-1.8-4.3-3.5-2.4-3.4-4.2-9.7-1.8-13.9 1.2-2.1 3.4-3.4 5.7-3.5 1.8 0 3.4 1.2 4.5 1.2 1.1 0 3.1-1.4 5.2-1.2 0.9 0 3.4 0.4 5 2.7z"/>
</g></svg>
<svg class="abs" style="left:1055.1px;top:1441.4px;overflow:visible" width="120" height="130" viewBox="-60 -65 120 130"><defs><linearGradient id="ntY" x1="0" y1="0" x2="0" y2="1"><stop offset="0" stop-color="#fddc45"/><stop offset=".75" stop-color="#fbcb22"/><stop offset="1" stop-color="#e9b21a"/></linearGradient>
<linearGradient id="ntP" x1="0" y1="0" x2="0" y2="1"><stop offset="0" stop-color="#fcfcfa"/><stop offset=".96" stop-color="#f8f7f4"/><stop offset="1" stop-color="#e4dfcf"/></linearGradient></defs>
<g transform="rotate(-8.9)">
<rect x="-43.8" y="-49.85" width="87.6" height="102.5" fill="#6a5212" rx="1.5"/>
<rect x="-43.2" y="-51.85" width="86.4" height="102.1" fill="url(#ntP)"/>
<g stroke="#cfcfd2" stroke-width=".9"><path d="M-43.2 -27.95 H43.2"/><path d="M-43.2 -21.6 H43.2"/><path d="M-43.2 -15.25 H43.2"/><path d="M-43.2 -8.9 H43.2"/><path d="M-43.2 -2.55 H43.2"/><path d="M-43.2 3.8 H43.2"/><path d="M-43.2 10.15 H43.2"/><path d="M-43.2 16.5 H43.2"/><path d="M-43.2 22.85 H43.2"/><path d="M-43.2 29.2 H43.2"/><path d="M-43.2 35.55 H43.2"/><path d="M-43.2 41.9 H43.2"/><path d="M-43.2 48.25 H43.2"/></g>
<rect x="-43.2" y="-51.85" width="86.4" height="17.4" fill="url(#ntY)"/>
<path d="M-43.2 -32.85 H43.2" stroke="#b9b4a6" stroke-width="1" stroke-dasharray="1.2 1.6"/>
</g></svg>
<svg class="abs" style="left:1193.2px;top:1451px;overflow:visible" width="114" height="114" viewBox="-57 -57 114 114"><defs><linearGradient id="phB" x1="0" y1="0" x2="0" y2="1"><stop offset="0" stop-color="#ffffff"/><stop offset="1" stop-color="#e2e2e4"/></linearGradient></defs>
<circle r="56.3" fill="url(#phB)"/>
<g style="isolation:isolate"><path transform="rotate(0)" d="M-13.5 -15.5 V-33.5 A13.5 13.5 0 0 1 13.5 -33.5 V-15.5 A13.5 13.5 0 0 1 -13.5 -15.5Z" fill="#f8a637" style="mix-blend-mode:multiply"/><path transform="rotate(45)" d="M-13.5 -15.5 V-33.5 A13.5 13.5 0 0 1 13.5 -33.5 V-15.5 A13.5 13.5 0 0 1 -13.5 -15.5Z" fill="#f6e428" style="mix-blend-mode:multiply"/><path transform="rotate(90)" d="M-13.5 -15.5 V-33.5 A13.5 13.5 0 0 1 13.5 -33.5 V-15.5 A13.5 13.5 0 0 1 -13.5 -15.5Z" fill="#b6d84b" style="mix-blend-mode:multiply"/><path transform="rotate(135)" d="M-13.5 -15.5 V-33.5 A13.5 13.5 0 0 1 13.5 -33.5 V-15.5 A13.5 13.5 0 0 1 -13.5 -15.5Z" fill="#5ec494" style="mix-blend-mode:multiply"/><path transform="rotate(180)" d="M-13.5 -15.5 V-33.5 A13.5 13.5 0 0 1 13.5 -33.5 V-15.5 A13.5 13.5 0 0 1 -13.5 -15.5Z" fill="#6cace8" style="mix-blend-mode:multiply"/><path transform="rotate(225)" d="M-13.5 -15.5 V-33.5 A13.5 13.5 0 0 1 13.5 -33.5 V-15.5 A13.5 13.5 0 0 1 -13.5 -15.5Z" fill="#a48ed6" style="mix-blend-mode:multiply"/><path transform="rotate(270)" d="M-13.5 -15.5 V-33.5 A13.5 13.5 0 0 1 13.5 -33.5 V-15.5 A13.5 13.5 0 0 1 -13.5 -15.5Z" fill="#dd83ae" style="mix-blend-mode:multiply"/><path transform="rotate(315)" d="M-13.5 -15.5 V-33.5 A13.5 13.5 0 0 1 13.5 -33.5 V-15.5 A13.5 13.5 0 0 1 -13.5 -15.5Z" fill="#f2725c" style="mix-blend-mode:multiply"/></g><circle r="2.2" fill="#fff"/></svg>
<div class="abs" style="left:1329px;top:1450.7px;width:114px;height:114px;border-radius:50%;background:conic-gradient(from 0deg,#f95f6c 0deg,#ee6078 40deg,#c577b4 75deg,#8d92de 100deg,#3fc2f4 140deg,#3aa8f6 175deg,#6a78f8 200deg,#905cf6 225deg,#c052e0 260deg,#e54fb0 295deg,#f6557c 330deg,#f95f6c 360deg)"></div>
<svg class="abs" style="left:1328px;top:1449.7px;overflow:visible" width="116" height="116" viewBox="-58 -58 116 116"><defs><linearGradient id="itR" x1=".15" y1=".1" x2=".85" y2=".95"><stop offset="0" stop-color="#fb5a62"/><stop offset=".35" stop-color="#e14fc0"/><stop offset=".6" stop-color="#9a5cf5"/><stop offset="1" stop-color="#1fc8f8"/></linearGradient>
<linearGradient id="itR2" x1="0" y1="0" x2="1" y2="0"><stop offset="0" stop-color="#000" stop-opacity="0"/><stop offset="1" stop-color="#8a86e0" stop-opacity=".0"/></linearGradient>
<linearGradient id="itW" x1="0" y1="0" x2="0" y2="1"><stop offset="0" stop-color="#fbfafc"/><stop offset="1" stop-color="#e6e8f0"/></linearGradient>
<linearGradient id="itN" x1="0" y1="0" x2="0" y2="1" gradientUnits="userSpaceOnUse" y1u="-37" ><stop offset="0" stop-color="#fc5c72"/><stop offset=".35" stop-color="#e9559c"/><stop offset=".7" stop-color="#a35cf0"/><stop offset="1" stop-color="#8a5cf8"/></linearGradient>
<linearGradient id="itN1" x1="0" y1="-37" x2="0" y2="35" gradientUnits="userSpaceOnUse"><stop offset="0" stop-color="#fc5c6e"/><stop offset=".3" stop-color="#ec5690"/><stop offset=".62" stop-color="#b45ce0"/><stop offset="1" stop-color="#8a5cfa"/></linearGradient>
<linearGradient id="itN2" x1="0" y1="-37" x2="0" y2="30" gradientUnits="userSpaceOnUse"><stop offset="0" stop-color="#fc5c6e"/><stop offset=".3" stop-color="#ec5690"/><stop offset=".6" stop-color="#a06ce8"/><stop offset=".85" stop-color="#3f9cf6"/><stop offset="1" stop-color="#3aa0f6"/></linearGradient></defs>
<circle r="51.8" fill="url(#itW)"/>
<path d="M-13 -29.4 L24.7 -36.6 V18.9 H21.4 V-19.7 L-9.7 -13.2 V25.5 H-13Z" fill="url(#itN1)"/>
<path d="M-13 -29.4 L24.7 -36.6 V-20.3 L-13 -12.6Z" fill="url(#itN1)"/>
<ellipse cx="-21.3" cy="25.2" rx="10.8" ry="8.9" transform="rotate(-18 -21.3 25.2)" fill="url(#itN1)"/>
<path d="M21.4 -19.7 H24.7 V19.5 H21.4Z" fill="url(#itN2)"/>
<ellipse cx="14.6" cy="18.7" rx="10.6" ry="8.7" transform="rotate(-18 14.6 18.7)" fill="url(#itN2)"/></svg>
<svg class="abs" style="left:1466.1px;top:1452px;overflow:visible" width="112" height="112" viewBox="-56 -56 112 112"><defs><linearGradient id="asB" x1="0" y1="0" x2="0" y2="1"><stop offset="0" stop-color="#1bb4fc"/><stop offset=".5" stop-color="#1d8cf8"/><stop offset="1" stop-color="#1d5ff2"/></linearGradient>
<linearGradient id="asR" x1="0" y1="0" x2="0" y2="1"><stop offset="0" stop-color="#fcfcfd"/><stop offset="1" stop-color="#cfd2d8"/></linearGradient></defs>
<circle r="56" fill="url(#asR)"/><circle r="51.8" fill="url(#asB)"/>
<g stroke="#f4f4f6" stroke-width="8.3" stroke-linecap="round" fill="none">
<path d="M-33.8 8.7 H33.8"/><path d="M6.1 -33.5 L-16.1 4.8"/><path d="M-21.8 17.2 L-26.8 25"/><path d="M-6.7 -33.5 L26.6 24.7"/></g></svg>
<svg class="abs" style="left:1598.3px;top:1447.1px;overflow:visible" width="120" height="120" viewBox="-60 -60 120 120"><defs><linearGradient id="mtB" x1="0" y1="0" x2="0" y2="1"><stop offset="0" stop-color="#3dadf0"/><stop offset="1" stop-color="#4c98de"/></linearGradient>
<linearGradient id="mtL" x1="0" y1="0" x2="0" y2="1"><stop offset="0" stop-color="#4a92da"/><stop offset="1" stop-color="#5c8fce"/></linearGradient>
<clipPath id="mtC"><circle r="53.2"/></clipPath></defs>
<circle r="58.6" fill="#fdfdfd"/><circle r="53.2" fill="url(#mtB)"/>
<g clip-path="url(#mtC)"><rect x="-60" y="19.1" width="120" height="50" fill="url(#mtL)"/>
<rect x="-60" y="15.5" width="120" height="7.2" fill="#fdfdfd"/>
<g stroke="#fdfdfd" stroke-width="7.4" fill="none" stroke-linejoin="miter" stroke-miterlimit="10"><path d="M-15.8 17.5 L9.7 -36.5 L36.9 17.5"/><path d="M-41.9 17.5 L-23.6 -19 L-11.8 4.5"/></g></g></svg>
<svg class="abs" style="left:1733.9px;top:1442.2px;overflow:visible" width="120" height="130" viewBox="-60 -65 120 130"><defs><linearGradient id="vdS" x1="0" y1="0" x2="0" y2="1"><stop offset="0" stop-color="#8ff0dc"/><stop offset=".07" stop-color="#2d9a82"/><stop offset=".2" stop-color="#125c4a"/><stop offset=".6" stop-color="#0c5c47"/><stop offset="1" stop-color="#0f7a5c"/></linearGradient>
<linearGradient id="vdB" x1="0" y1="0" x2="0" y2="1"><stop offset="0" stop-color="#f2f1ec"/><stop offset=".85" stop-color="#e4e2db"/><stop offset="1" stop-color="#c8c2a8"/></linearGradient>
<linearGradient id="vdA" x1="0" y1="0" x2="0" y2="1"><stop offset="0" stop-color="#d9922f"/><stop offset=".5" stop-color="#a86a26"/><stop offset="1" stop-color="#94602a"/></linearGradient>
<linearGradient id="vdL" x1="0" y1="0" x2="1" y2="0"><stop offset="0" stop-color="#7ff6e0" stop-opacity="0"/><stop offset=".5" stop-color="#9ffbe8"/><stop offset="1" stop-color="#7ff6e0" stop-opacity="0"/></linearGradient>
<clipPath id="vdC"><path d="M-40.5 5 V-46 Q-40.5 -52 -34.5 -52 H34.5 Q40.5 -52 40.5 -46 V5Z"/></clipPath></defs>
<g transform="rotate(-10.8)">
<rect x="-44.5" y="-55.3" width="89" height="110.6" rx="9.5" fill="url(#vdB)"/>
<path d="M-40.5 5 V-46 Q-40.5 -52 -34.5 -52 H34.5 Q40.5 -52 40.5 -46 V5Z" fill="url(#vdS)"/>
<g clip-path="url(#vdC)">
<path d="M-18 -50 L-30 8 M-6 -50 L-20 8 M12 -50 L-2 8 M22 -50 L10 8" stroke="#0a4a3c" stroke-width="3" opacity=".55"/>
<rect x="-24.5" y="-52" width="5" height="60" fill="url(#vdL)"/><rect x="19.5" y="-52" width="5" height="60" fill="url(#vdL)"/>
<rect x="-22.6" y="-52" width="1.2" height="60" fill="#c8fff2"/><rect x="21.4" y="-52" width="1.2" height="60" fill="#c8fff2"/>
</g>
<rect x="-45" y="8.4" width="92.5" height="10.8" fill="#1c1b1b"/>
<text x="0" y="17.3" text-anchor="middle" font-family="Liberation Sans, sans-serif" font-weight="bold" font-size="9" fill="#35c8a4">VisualDiffer</text>
<rect x="-38.5" y="25.5" width="37.5" height="18" fill="#15130f"/><rect x="-35.5" y="28.5" width="31.5" height="12.5" fill="url(#vdA)"/>
<rect x="5" y="25.5" width="37.5" height="18" fill="#15130f"/><rect x="8" y="28.5" width="31.5" height="12.5" fill="url(#vdA)"/>
<path d="M-32 38 L-22 33 L-16 35 L-8 31 M11 38 L21 33 L27 35 L35 31" stroke="#d9a050" stroke-width="1.5" fill="none" opacity=".7"/>
</g></svg>
<svg class="abs" style="left:1932px;top:1461px" width="121" height="95" viewBox="0 0 121 95"><defs><linearGradient id="dlF" x1="0" y1="0" x2="0" y2="1"><stop offset="0" stop-color="#45ace2"/><stop offset=".12" stop-color="#52b0e2"/><stop offset=".7" stop-color="#76bde0"/><stop offset=".9" stop-color="#62aed6"/><stop offset="1" stop-color="#58a6d0"/></linearGradient>
<linearGradient id="dlK" x1="0" y1="0" x2="0" y2="1"><stop offset="0" stop-color="#5a9cc0"/><stop offset="1" stop-color="#467fa2"/></linearGradient></defs>
<path d="M1.5 3 Q1.5 0.5 4 0.5 H33 Q35.5 0.5 37 2.2 L42.5 8.6 H117 Q119.8 8.6 119.8 11.4 V30 H1.5Z" fill="url(#dlK)"/>
<path d="M1 15 H120 V91 Q120 94 117 94 H4 Q1 94 1 91Z" fill="url(#dlF)"/>
<path d="M1 87.5 H120 M1 90.5 H120" stroke="#4f9ccc" stroke-width=".8" opacity=".7"/>
<circle cx="59.9" cy="51" r="26.5" fill="#4b9fd0" opacity=".85"/>
<path d="M53.6 36.8 H66.2 V52.4 H75.3 L59.9 66.5 L44.5 52.4 H53.6Z" fill="#72bbe4"/></svg>
<svg class="abs" style="left:2081.5px;top:1452px" width="93" height="115" viewBox="0 0 93 115"><defs><linearGradient id="trB" x1="0" y1="0" x2="1" y2="0"><stop offset="0" stop-color="#35383a"/><stop offset=".3" stop-color="#44474a"/><stop offset=".55" stop-color="#3e4143"/><stop offset=".85" stop-color="#46484b"/><stop offset="1" stop-color="#343638"/></linearGradient>
<linearGradient id="trI" x1="0" y1="0" x2="1" y2="0"><stop offset="0" stop-color="#38393c"/><stop offset=".5" stop-color="#2d2e30"/><stop offset="1" stop-color="#3e3f42"/></linearGradient>
<linearGradient id="trG" x1="0" y1="0" x2="0" y2="1"><stop offset=".7" stop-color="#fff" stop-opacity="0"/><stop offset="1" stop-color="#fff" stop-opacity=".10"/></linearGradient></defs>
<path d="M0.5 10.5 C0.5 4 20 0.3 46 0.3 C72 0.3 92 4 92 10.5 L80.5 104 C80 110 64 114 46 114 C28 114 13 110 12.5 104Z" fill="url(#trB)"/>
<path d="M0.5 10.5 C0.5 4 20 0.3 46 0.3 C72 0.3 92 4 92 10.5 L80.5 104 C80 110 64 114 46 114 C28 114 13 110 12.5 104Z" fill="url(#trG)"/>
<ellipse cx="46.2" cy="10.8" rx="45" ry="9.8" fill="url(#trI)"/>
<path d="M1.2 11 C4 19 24 22.5 46 22.5 C68 22.5 88 19 91.2 11" fill="none" stroke="#55585b" stroke-width="1.2" opacity=".8"/></svg>
<!--DOCK-ICONS-END-->

</body>
</html>
